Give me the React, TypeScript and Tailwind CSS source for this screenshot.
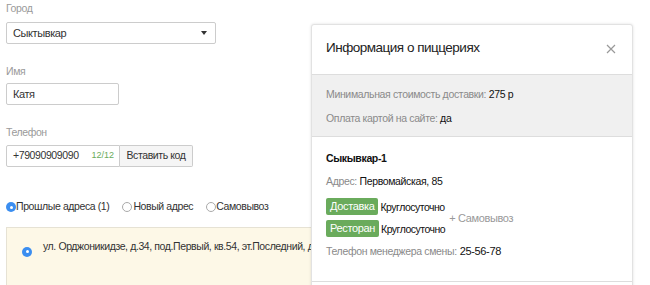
import React from 'react';

const font = { fontFamily: '"Liberation Sans", Arial, sans-serif' };

const Radio = ({ checked }: { checked?: boolean }) =>
  checked ? (
    <span className="inline-flex h-[10px] w-[10px] shrink-0 items-center justify-center rounded-full bg-[#3b8ef0]">
      <span className="h-[3px] w-[3px] rounded-full bg-white" />
    </span>
  ) : (
    <span className="inline-block h-[10px] w-[10px] shrink-0 rounded-full border border-[#aaa] bg-white" />
  );

const Badge = ({ children }: { children: React.ReactNode }) => (
  <span className="inline-flex h-[17px] items-center rounded-[2px] bg-[#6aab5c] px-[4px] text-[11px] leading-[17px] text-white">
    {children}
  </span>
);

export default function App() {
  return (
    <div className="relative h-[285px] w-[650px] overflow-hidden bg-white text-[10.5px] tracking-[-0.4px] text-[#333]" style={font}>
      {/* form */}
      <div className="flex flex-col pt-[1px] pl-[6px]">
        <div className="h-[14px] leading-[14px] text-[#9a9a9a]">Город</div>
        <div className="mt-[7px] flex h-[22px] w-[210px] items-center justify-between rounded-[2px] border border-[#ccc] pl-[6px] pr-[8px] text-[11px]">
          <span>Сыктывкар</span>
          <span className="h-0 w-0 border-x-[3px] border-t-[4px] border-x-transparent border-t-[#333]" />
        </div>

        <div className="mt-[20px] h-[14px] leading-[14px] text-[#9a9a9a]">Имя</div>
        <div className="mt-[5px] flex h-[22px] w-[113px] items-center rounded-[2px] border border-[#ccc] pl-[6px] text-[11px]">
          Катя
        </div>

        <div className="mt-[20px] h-[14px] leading-[14px] text-[#9a9a9a]">Телефон</div>
        <div className="mt-[6px] flex h-[22px] w-[187px] items-stretch">
          <div className="flex w-[114px] items-center justify-between rounded-l-[2px] border border-[#ccc] pl-[6px] pr-[5px]">
            <span>+79090909090</span>
            <span className="text-[9px] tracking-normal text-[#6aab5c]">12/12</span>
          </div>
          <div className="flex flex-1 items-center justify-center whitespace-nowrap rounded-r-[2px] border border-l-0 border-[#ccc] bg-[#f5f5f5]">
            Вставить код
          </div>
        </div>

        <div className="mt-[33px] flex h-[14px] items-center whitespace-nowrap">
          <Radio checked />
          <span className="mr-[13px]">Прошлые адреса (1)</span>
          <Radio />
          <span className="mr-[13px] ml-[1px]">Новый адрес</span>
          <Radio />
          <span>Самовывоз</span>
        </div>

        <div className="mt-[13px] flex h-[70px] w-[600px] items-start gap-[11px] whitespace-nowrap border border-[#e6e2d4] bg-[#fdf8e7] pl-[15px] pt-[11px]">
          <span className="mt-[3px]">
            <Radio checked />
          </span>
          <span>ул. Орджоникидзе, д.34, под.Первый, кв.54, эт.Последний, домофон 54</span>
        </div>
      </div>

      {/* modal */}
      <div className="absolute left-[311px] top-[24px] flex h-[300px] w-[322px] flex-col rounded-t-[3px] border border-[#e2e2e2] bg-white shadow-[0_0_3px_rgba(0,0,0,0.12)]">
        <div className="flex h-[50px] shrink-0 items-center justify-between border-b border-[#ddd] pb-[2px] pl-[14px] pr-[16px]">
          <span className="text-[13.5px] tracking-[-0.5px] text-[#222]">Информация о пиццериях</span>
          <svg width="10" height="10" viewBox="0 0 10 10" className="text-[#999]">
            <path d="M1 1L9 9M9 1L1 9" stroke="currentColor" strokeWidth="1.2" />
          </svg>
        </div>
        <div className="flex h-[62px] shrink-0 flex-col justify-center gap-[10px] border-b border-[#ddd] bg-[#f0f0f0] pl-[14px] leading-[14px] tracking-[-0.35px]">
          <div>
            <span className="text-[#8a8a8a]">Минимальная стоимость доставки: </span>
            <span className="text-[#111]">275 р</span>
          </div>
          <div>
            <span className="text-[#8a8a8a]">Оплата картой на сайте: </span>
            <span className="text-[#111]">да</span>
          </div>
        </div>
        <div className="flex h-[145px] shrink-0 flex-col border-b border-[#ddd] pl-[14px] pt-[14px] leading-[14px] tracking-[-0.35px]">
          <div className="font-bold text-[#111]">Сыкывкар-1</div>
          <div className="mt-[9px]">
            <span className="text-[#8a8a8a]">Адрес: </span>
            <span className="text-[#111]">Первомайская, 85</span>
          </div>
          <div className="mt-[10px] flex items-center">
            <div className="flex flex-col gap-[5px]">
              <div className="flex items-center gap-[2px]">
                <Badge>Доставка</Badge>
                <span className="text-[10.5px] tracking-[-0.5px] text-[#111]">Круглосуточно</span>
              </div>
              <div className="flex items-center gap-[2px]">
                <Badge>Ресторан</Badge>
                <span className="text-[10.5px] tracking-[-0.5px] text-[#111]">Круглосуточно</span>
              </div>
            </div>
            <span className="ml-[4px] text-[11px] text-[#999]">+ Самовывоз</span>
          </div>
          <div className="mt-[7px] flex h-[14px] items-center gap-[3px] whitespace-nowrap">
            <span className="text-[#8a8a8a]">Телефон менеджера смены:</span>
            <span className="text-[11px] text-[#111]">25-56-78</span>
          </div>
        </div>
      </div>
    </div>
  );
}
